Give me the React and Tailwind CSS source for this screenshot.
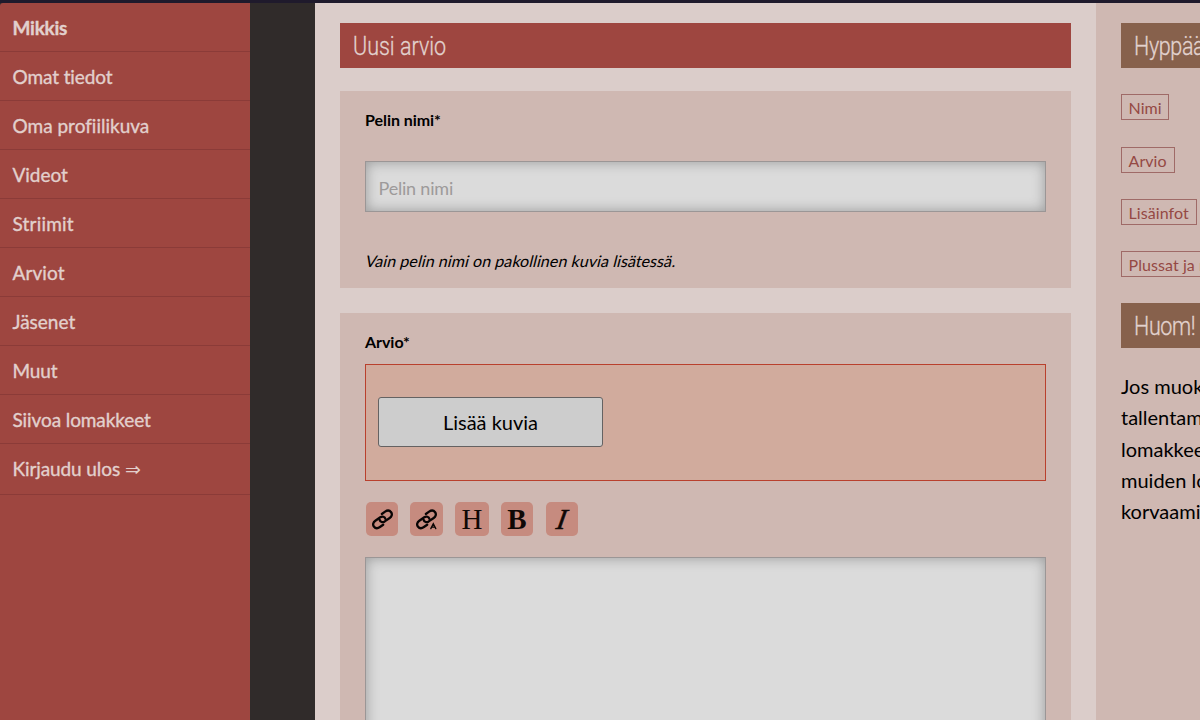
import React from 'react';

const menu = [
  ['Omat tiedot', 'tracking-[-0.1px]'],
  ['Oma profiilikuva', 'tracking-[0px]'],
  ['Videot', 'tracking-[-0.05px]'],
  ['Striimit', 'tracking-[0.2px]'],
  ['Arviot', 'tracking-[0.1px]'],
  ['Jäsenet', 'tracking-[0px]'],
  ['Muut', 'tracking-[-0.1px]'],
  ['Siivoa lomakkeet', 'tracking-[-0.1px]'],
];

function Heading({ children, className }) {
  return (
    <h2 className={'flex h-[45px] items-center overflow-hidden whitespace-nowrap pt-[2px] pl-[12.5px] font-["Roboto",sans-serif] text-[25px] font-light leading-[45px] text-[#e2d2ce] [-webkit-text-stroke:0.3px_#e2d2ce] ' + className}>
      <span className="inline-block origin-left scale-x-[0.86]">{children}</span>
    </h2>
  );
}

function LinkIcon({ letter }) {
  return (
    <svg viewBox="0 0 24 24" className="h-[23px] w-[23px]" fill="none" stroke="#080404" strokeWidth="2.4" strokeLinecap="round">
      <path d="M9 12.4c.6 2.3 3.1 3 5.3 1.6l5.2-3.6c2.3-1.6 2.9-4.1 1.5-6-1.5-2-4.1-2.1-6.3-.6l-3.4 2.4" />
      <path d="M15 11.3c-.6-2.3-3.1-3-5.3-1.6l-5.2 3.6c-2.3 1.6-2.9 4.1-1.5 6 1.5 2 4.1 2.1 6.3.6l3.4-2.4" />
      {letter && <path d="M16.5 21.5l2.6-5 2.6 5M17.6 20h3" strokeWidth="1.4" />}
    </svg>
  );
}

function Tool({ children, className }) {
  return (
    <button className={'flex h-[34px] items-center justify-center rounded-[5px] bg-[#c68b7f] font-["Liberation_Serif",serif] text-[29px] leading-none text-[#100806] ' + className}>
      {children}
    </button>
  );
}

function Jump({ children, className }) {
  return (
    <a className={'flex h-[26px] items-center whitespace-nowrap border border-[#9f6a67] pt-[2px] pl-[6.5px] text-[16px] leading-none tracking-[0.08px] text-[#954944] ' + className}>
      {children}
    </a>
  );
}

export default function App() {
  return (
    <div className="flex h-[720px] w-[1200px] flex-col overflow-hidden bg-[#302b2a] font-['Lato',sans-serif] text-black [font-variant-ligatures:none]">
      <div className="h-[3px] shrink-0 bg-[#1f1a2c]" />
      <div className="flex min-h-0 flex-1">
        <nav className="w-[250px] shrink-0 rounded-tl-[3px] bg-[#9e4640] text-[19px] text-[#e2d0cd] [-webkit-text-stroke:0.35px_#e2d0cd]">
          <a className="flex h-[49px] items-center border-b border-[#8b3b38] pt-[2px] pl-[12.5px] font-bold tracking-[-0.25px]">Mikkis</a>
          {menu.map(([item, tracking]) => (
            <a key={item} className={'flex h-[49px] items-center border-b border-[#8b3b38] pt-[2px] pl-[12.5px] ' + tracking}>{item}</a>
          ))}
          <a className="flex h-[51px] items-center border-b border-[#8b3b38] pl-[12.5px] tracking-[-0.1px]">
            <span className="whitespace-pre">Kirjaudu ulos </span>
            <span className="[-webkit-text-stroke:0px]">⇒</span>
          </a>
        </nav>
        <main className="ml-[65px] w-[781px] shrink-0 bg-[#dbcdca] px-[25px] pt-5">
          <Heading className="bg-[#9e4640]">Uusi arvio</Heading>
          <section className="mt-[23px] h-[197px] bg-[#cfb8b2] px-[25px] pt-[19px]">
            <label className="block h-[51px] text-[16px] font-bold leading-5 tracking-[-0.05px]">Pelin nimi*</label>
            <input
              placeholder="Pelin nimi"
              className="block h-[51px] w-full border border-[#9b9696] bg-[#dbdbdb] px-[12.5px] pt-[3px] text-[18px] tracking-[-0.2px] shadow-[inset_0_0_13px_rgba(0,0,0,0.3)] placeholder:text-[#9d9a9a]"
            />
            <p className="mt-[39px] text-[16px] leading-5">
              <span className="ml-[0.5px] inline-block -skew-x-[14deg] whitespace-nowrap tracking-[0.07px]">Vain pelin nimi on pakollinen kuvia lisätessä.</span>
            </p>
          </section>
          <section className="mt-[25px] h-[500px] bg-[#cfb8b2] px-[25px] pt-[19px]">
            <label className="block h-[32px] text-[16px] font-bold leading-5 tracking-[-0.05px]">Arvio*</label>
            <div className="h-[117px] border border-[#b9402d] bg-[#d1ab9d] pt-[32px] pl-[12px]">
              <button className="h-[50px] w-[225px] rounded-[3px] border border-[#656262] bg-[#cdcdcd] pb-[1px] text-[20px]">Lisää kuvia</button>
            </div>
            <div className="mt-[21px] flex">
              <Tool className="ml-[1px] w-[32px]"><LinkIcon /></Tool>
              <Tool className="ml-[12px] w-[33px]"><LinkIcon letter /></Tool>
              <Tool className="ml-[12px] w-[34px]">H</Tool>
              <Tool className="ml-[12px] w-[32px] font-bold">B</Tool>
              <Tool className="ml-[13px] w-[32px] italic [-webkit-text-stroke:0.5px_#100806]"><span className="inline-block -skew-x-[10deg]">I</span></Tool>
            </div>
            <textarea className="mt-[21px] block h-[300px] w-full resize-none border border-[#9b9696] bg-[#dbdbdb] shadow-[inset_0_0_13px_rgba(0,0,0,0.3)]" />
          </section>
        </main>
        <aside className="w-[104px] shrink-0 overflow-hidden bg-[#cfb8b2] pt-5 pl-[25px]">
          <Heading className="w-[225px] bg-[#87614c]"><span className="tracking-[-0.4px]">Hyppää</span></Heading>
          <Jump className="mt-[26px] w-[48px]">Nimi</Jump>
          <Jump className="mt-[27px] w-[54px]">Arvio</Jump>
          <Jump className="mt-[26px] w-[76px]">Lisäinfot</Jump>
          <Jump className="mt-[26px] w-[140px]">Plussat ja miinukset</Jump>
          <Heading className="mt-[26px] w-[225px] bg-[#87614c]"><span className="tracking-[-0.4px]">Huom!</span></Heading>
          <p className="mt-[23px] w-[225px] whitespace-nowrap text-[20px] leading-[31.25px]">
            Jos muokkaat<br />tallentamatta<br />lomakkeen<br />muiden lomakkeiden<br />korvaamisen
          </p>
        </aside>
      </div>
    </div>
  );
}
